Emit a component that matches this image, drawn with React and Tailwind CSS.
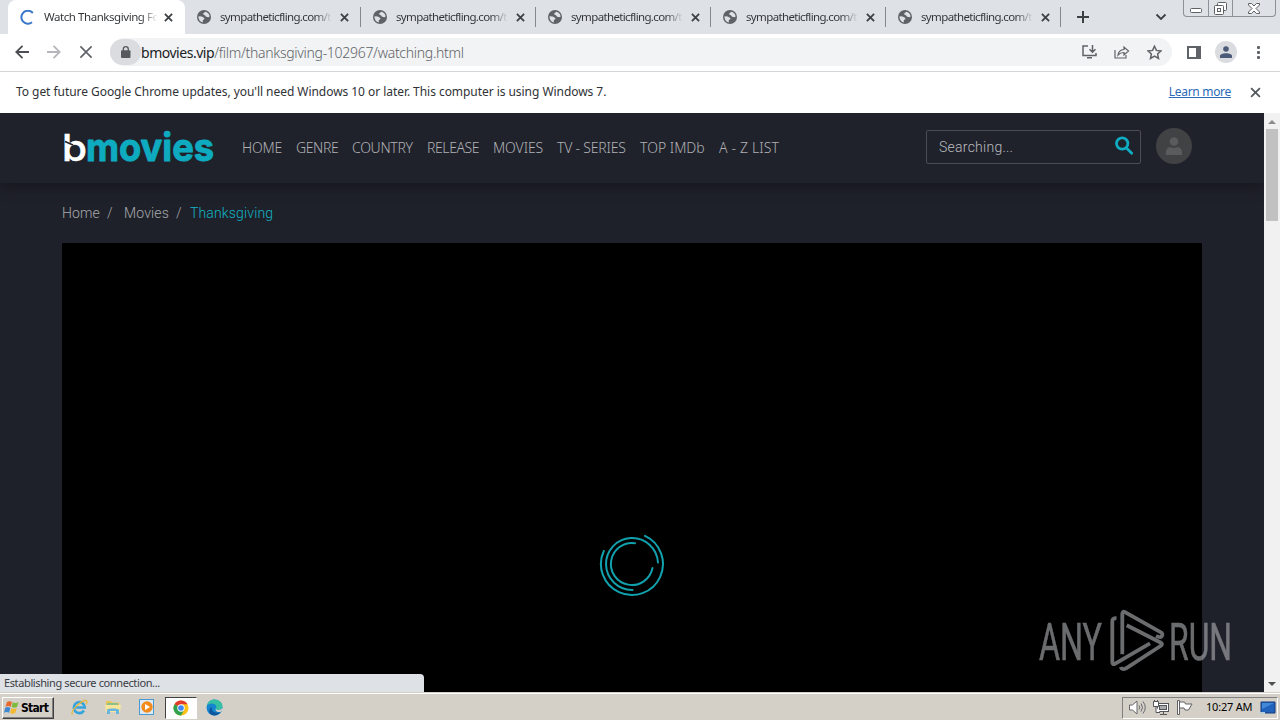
import React from 'react';

const tabs = [1, 2, 3, 4, 5];

const navItems = [
  { label: 'HOME', style: 'w-[54px] tracking-[-0.2px]' },
  { label: 'GENRE', style: 'w-[56px] tracking-[-0.4px]' },
  { label: 'COUNTRY', style: 'w-[75px] tracking-[-0.3px]' },
  { label: 'RELEASE', style: 'w-[66px] tracking-[-0.4px]' },
  { label: 'MOVIES', style: 'w-[64px] tracking-[-0.1px]' },
  { label: 'TV - SERIES', style: 'w-[83px] tracking-[-0.2px]' },
  { label: 'TOP IMDb', style: 'w-[79px]' },
  { label: 'A - Z LIST', style: 'w-[70px] tracking-[0.15px]' }
];

const Cross = ({ size = 9, width = 2, color = '#3c4043' }) => (
  <svg width={size} height={size} viewBox="0 0 10 10" stroke={color} strokeWidth={width} className="shrink-0">
    <path d="M1 1L9 9M9 1L1 9" />
  </svg>
);

const Globe = () => (
  <svg width="14" height="14" viewBox="0 0 14 14" className="shrink-0">
    <circle cx="7" cy="7" r="7" fill="#5f6368" />
    <path d="M8.5 1.8L6.3 3.2v1.4l1.6.6 1.2 1.6 2.5.4 1-.6a5.6 5.6 0 0 0-4.1-4.8z" fill="#dee1e6" />
    <path d="M1.5 6.2l3.2.2 2.6 1.5v1.4L5.8 10v2.4A5.6 5.6 0 0 1 1.5 6.2z" fill="#dee1e6" />
  </svg>
);

const TabStrip = () => (
  <div className="flex h-[34px] bg-[#dee1e6] text-[11.5px]">
    <div className="ml-2 flex h-[34px] w-[177px] shrink-0 items-center rounded-t-lg bg-white pl-3">
      <svg width="15" height="15" viewBox="0 0 15 15" fill="none" className="shrink-0">
        <path d="M12.8 3A6.5 6.5 0 1 0 12 12.3" stroke="#3b78c9" strokeWidth="2" />
      </svg>
      <div className="ml-[9px] w-[114px] whitespace-nowrap bg-gradient-to-r from-[#303336] from-85% to-transparent bg-clip-text tracking-[-0.44px] text-transparent">
        Watch Thanksgiving Fo
      </div>
      <div className="ml-[6px] flex"><Cross /></div>
    </div>
    {tabs.map(tab => (
      <div key={tab} className="flex h-[34px] w-[175px] shrink-0 items-center pl-3 [&:nth-child(n+3)]:pl-[13px]">
        <Globe />
        <div className="ml-[9px] w-[112px] whitespace-nowrap bg-gradient-to-r from-[#303336] from-85% to-transparent bg-clip-text tracking-[-0.64px] text-transparent">
          sympatheticfling.com/t
        </div>
        <div className="ml-[8px] flex"><Cross /></div>
        <div className="-mr-px ml-auto h-[20px] w-px bg-[#85888d]"></div>
      </div>
    ))}
    <div className="flex w-[46px] shrink-0 items-center justify-center">
      <svg width="12" height="12" viewBox="0 0 12 12" stroke="#3c4043" strokeWidth="2">
        <path d="M6 0V12M0 6H12" />
      </svg>
    </div>
    <div className="ml-[49px] flex w-[12px] shrink-0 items-center">
      <svg width="12" height="8" viewBox="0 0 12 8" fill="none" stroke="#3c4043" strokeWidth="1.8">
        <path d="M1.5 1.5L6 6l4.500-4.500" />
      </svg>
    </div>
    {/* Window controls */}
    <div className="ml-[16px] flex h-[17px] w-[93px] shrink-0 rounded-b-[4px] border border-t-0 border-[#8d9198] text-[#5d6065]">
      <div className="flex w-[25px] justify-center border-r border-[#8d9198]">
        <svg width="12" height="5" viewBox="0 0 12 5" className="mt-[8px]">
          <rect x=".5" y=".5" width="11" height="4" rx="1" fill="#fff" stroke="currentColor" />
        </svg>
      </div>
      <div className="flex w-[25px] justify-center border-r border-[#8d9198]">
        <svg width="13" height="13" viewBox="0 0 13 13" fill="#fff" stroke="currentColor" className="mt-[2px]">
          <rect x="3.500" y=".5" width="9" height="8" rx="1" />
          <rect x=".5" y="3.500" width="9" height="9" rx="1" />
          <rect x="3.500" y="6.500" width="3" height="3" />
        </svg>
      </div>
      <div className="flex w-[42px] justify-center">
        <svg width="12" height="11" viewBox="0 0 12 11" fill="#fff" stroke="currentColor" className="mt-[3px]">
          <path d="M.5.5h3L6 3 8.500.5h3v1.500L8 5.500 11.500 9v1.500h-3L6 8l-2.500 2.500h-3V9L4 5.500.5 2z" />
        </svg>
      </div>
    </div>
  </div>
);

const Toolbar = () => (
  <div className="flex h-[38px] items-center border-b border-[#d5d6d8] bg-white pb-px pl-[15px] text-[#5f6368]">
    <svg width="14" height="14" viewBox="0 0 14 14" fill="none" stroke="#4b4f53" strokeWidth="1.800">
      <path d="M14 7H1.500M7.500.8L1.300 7l6.200 6.200" />
    </svg>
    <svg width="14" height="14" viewBox="0 0 14 14" fill="none" stroke="#b5b7ba" strokeWidth="1.800" className="ml-[18px]">
      <path d="M0 7h12.500M6.500.8L12.700 7l-6.200 6.200" />
    </svg>
    <div className="ml-[18px] flex"><Cross size={14} width={1.2} color="#5f6368" /></div>
    <div className="ml-[17px] flex h-[28px] w-[1062px] shrink-0 items-center rounded-full bg-[#f1f3f4]">
      <div className="flex h-[26px] w-[31px] shrink-0 items-center justify-center rounded-full bg-[#dadce0]">
        <svg width="10" height="12" viewBox="0 0 10 12">
          <rect x="0" y="4.300" width="9.500" height="7.700" rx="1" fill="#55595e" />
          <path d="M2.300 5V3.200a2.500 2.500 0 0 1 5 0V5" fill="none" stroke="#55595e" strokeWidth="1.300" />
        </svg>
      </div>
      <div className="w-[939px] whitespace-nowrap text-[14px] font-light tracking-[-0.29px]">
        <span className="font-normal tracking-[-0.47px] text-[#202124]">bmovies.vip</span>/film/thanksgiving-102967/watching.html
      </div>
      <svg width="15" height="14" viewBox="0 0 15 14" fill="none" stroke="#5f6368" strokeWidth="1.500" className="ml-[2px] shrink-0">
        <path d="M6 1H1v9.500h13V8M5 12.700h5M10.500 0v7M7.500 4.300l3 3 3-3" />
      </svg>
      <svg width="16" height="14" viewBox="0 0 16 14" fill="none" stroke="#5f6368" strokeWidth="1.200" className="ml-[17px] shrink-0">
        <path d="M1 5v8h11v-3M4 10c.5-3.500 2.500-5.300 6-5.500V2l4.500 4L10 10V7.500C7.500 7.500 5.500 8.300 4 10z" />
      </svg>
      <svg width="15" height="15" viewBox="0 0 15 15" fill="none" stroke="#5f6368" strokeWidth="1.500" className="ml-[17px] shrink-0">
        <path d="M7.500 1.200l1.900 4.200 4.600.5-3.400 3.100.9 4.500-4-2.300-4 2.300.9-4.500L1 5.900l4.600-.5z" />
      </svg>
    </div>
    <svg width="14" height="13" viewBox="0 0 14 13" className="ml-[15px] shrink-0">
      <rect x="1" y="1" width="12" height="11" fill="none" stroke="#5f6368" strokeWidth="2" />
      <rect x="9" y="0" width="5" height="13" fill="#5f6368" />
    </svg>
    <div className="ml-[14px] flex h-[22px] w-[22px] shrink-0 items-center justify-center rounded-full bg-[#dadce0]">
      <svg width="12" height="12" viewBox="0 0 12 12" fill="#4c5978">
        <circle cx="6" cy="3" r="2.800" />
        <path d="M0 12V9.800C0 8 3.500 7.200 6 7.200s6 .8 6 2.600V12z" />
      </svg>
    </div>
    <svg width="3" height="13" viewBox="0 0 3 13" fill="#5f6368" className="ml-[20px] shrink-0">
      <rect width="3" height="3" rx="1" />
      <rect y="5" width="3" height="3" rx="1" />
      <rect y="10" width="3" height="3" rx="1" />
    </svg>
  </div>
);

const InfoBar = () => (
  <div className="flex h-[41px] items-center bg-white pl-4 pr-[19px] text-[12px] text-[#303236]">
    <span className="mb-[2px] whitespace-nowrap tracking-[-0.05px]">
      To get future Google Chrome updates, you'll need Windows 10 or later. This computer is using Windows 7.
    </span>
    <span className="mb-[2px] ml-auto mr-[19px] tracking-[-0.3px] text-[#2a6ab8] underline">Learn more</span>
    <Cross size={11} width={1.6} color="#55585c" />
  </div>
);

const SiteHeader = () => (
  <div className="relative flex h-[70px] shrink-0 items-center bg-[#20222b] pb-[2px] pl-[62px] shadow-[0_3px_14px_rgba(0,0,0,0.35)]">
    <svg width="154" height="40" viewBox="0 0 154 40" className="-mt-px shrink-0 overflow-visible font-['Inter']">
      <text x="0" y="33.500" fontSize="37" fontWeight="500" fill="#fff" stroke="#fff" strokeWidth=".5" textLength="25" lengthAdjust="spacingAndGlyphs">b</text>
      <path d="M3 14.500l8 3.500" stroke="#20222b" strokeWidth="1.500" />
      <text x="24" y="33.500" fontSize="39" fontWeight="700" fill="#0eabc0" stroke="#0eabc0" strokeWidth="1" strokeLinejoin="round" textLength="128" lengthAdjust="spacingAndGlyphs">movies</text>
    </svg>
    <div className="ml-[26px] mt-px flex text-[14px] font-light text-[#b0b1b5]">
      {navItems.map(item => (
        <span key={item.label} className={`${item.style} shrink-0 whitespace-nowrap`}>{item.label}</span>
      ))}
    </div>
    <div className="ml-auto mr-[15px] flex h-[34px] w-[215px] items-center rounded-[2px] border border-[#4b4c54] pl-3 pr-[7px] font-['Roboto'] text-[14px] font-light tracking-[0.25px] text-[#bbbcbf]">
      Searching...
      <svg width="18" height="19" viewBox="0 0 18 19" fill="none" stroke="#10acc2" strokeWidth="2.800" className="-mt-1 ml-auto">
        <circle cx="7.200" cy="7.500" r="5.700" />
        <path d="M11.500 12l5.200 5.200" strokeLinecap="round" />
      </svg>
    </div>
    <div className="-mt-[3px] mr-[72px] flex h-9 w-9 items-center justify-center rounded-full bg-[#414244]">
      <svg width="16" height="18" viewBox="0 0 16 18" fill="#5a5b5d">
        <circle cx="8" cy="4.500" r="4.300" />
        <path d="M0 18v-3c0-2.500 1.500-4.500 4-5 2.500 1.200 5.500 1.200 8 0 2.500.5 4 2.500 4 5v3z" />
      </svg>
    </div>
  </div>
);

const Spinner = () => (
  <svg width="66" height="64" viewBox="0 0 66 64" fill="none" stroke="#11a2ae" strokeWidth="2" strokeLinecap="round">
    <path d="M46 2.900A31 31 0 1 1 4.800 18" />
    <path d="M59 29.500A26 26 0 1 0 33.500 57" />
    <path d="M36 10.200A21 21 0 1 0 53.500 35" />
  </svg>
);

const Watermark = () => (
  <svg width="196" height="66" viewBox="0 0 196 66" className="overflow-visible font-['Roboto']">
    <g fill="#a5a7aa" stroke="#a5a7aa" strokeWidth=".6" opacity=".65" fontSize="51.500">
      <text x="2" y="51" textLength="63" lengthAdjust="spacingAndGlyphs">ANY</text>
      <text x="132" y="51" textLength="63" lengthAdjust="spacingAndGlyphs">RUN</text>
    </g>
    <g fill="none" stroke="#a5a7aa" strokeWidth="3.800" strokeLinejoin="round" opacity=".65">
      <path d="M79.500 9.300c-2.700-.3-4.200.7-4.200 2.700v41c0 2 1 2.700 2.500 1.800L113 34.300" />
      <path d="M85.300 45.300V5c0-2 1-2.800 2.700-1.800l35.500 20c2 1.200 2.500 2.500 1.200 4-1.200 1.500-3 1-5.700-.3" />
      <path d="M89.700 16.200l33.800 17.300c2 1 2 2.300 0 3.500L89 59.300c-2.500 1.300-4.500 1-5.300-1.300" />
    </g>
  </svg>
);

const Page = () => (
  <div className="relative flex h-[579px] overflow-hidden bg-[#1f212a]">
    <div className="flex w-[1264px] shrink-0 flex-col overflow-hidden">
      <SiteHeader />
      <div className="flex h-[60px] shrink-0 items-center pl-[62px] font-['Roboto'] text-[14px] font-light tracking-[0.15px] text-[#a8a9ad]">
        <span className="w-[45px]">Home</span>
        <span className="w-[17px]">/</span>
        <span className="w-[52px]">Movies</span>
        <span className="w-[14px]">/</span>
        <span className="text-[#10b5c5]">Thanksgiving</span>
      </div>
      <div className="ml-[62px] flex h-[449px] w-[1140px] justify-center bg-black pt-[290px]">
        <Spinner />
      </div>
    </div>
    <div className="flex w-4 flex-col items-center bg-[#f1f1f1] pb-[6px] pt-[7px]">
      <div className="h-0 w-0 border-x-4 border-b-4 border-x-transparent border-b-[#8b8b8b]"></div>
      <div className="mt-[5px] h-[92px] w-3 bg-[#c1c1c1]"></div>
      <div className="mt-auto h-0 w-0 border-x-4 border-t-4 border-x-transparent border-t-[#505050]"></div>
    </div>
    <div className="absolute bottom-[17px] left-[1037px] flex"><Watermark /></div>
    <div className="absolute bottom-0 left-0 flex h-[18px] w-[424px] items-center rounded-tr-[4px] bg-[#dee1e6] pl-1 text-[11px] tracking-[-0.38px] text-[#3c4043]">
      Establishing secure connection...
    </div>
  </div>
);

const Taskbar = () => (
  <div className="flex h-[28px] items-center border-t border-[#d4d0c8] bg-[#d4d0c8] text-black shadow-[inset_0_1px_0_#fff]">
    <div className="ml-[2px] mt-[2px] flex h-[22px] w-[52px] items-center border border-b-[#404040] border-l-white border-r-[#404040] border-t-white pl-px shadow-[inset_-1px_-1px_0_#808080]">
      <svg width="16" height="15" viewBox="0 0 16 15" className="shrink-0">
        <path d="M3 2c2-1.300 3.500-1 5 0L6.700 6.800C5 5.800 3.500 5.800 1.500 6.700z" fill="#e7682c" />
        <path d="M8.800 2.300c1.700 1 3.500 1 5.700 0L13 7c-2 1-3.700 1-5.400 0z" fill="#7fba3c" />
        <path d="M1.200 7.700c2-1 3.600-.8 5.200.2L5 12.800c-1.600-1-3-1-5 0z" fill="#3f88d2" />
        <path d="M7.300 8.200c1.600 1 3.400 1 5.400 0l-1.400 4.800c-2 1-3.700 1-5.300 0z" fill="#f4b92e" />
      </svg>
      <span className="ml-px font-['DejaVu_Sans_Condensed','DejaVu_Sans'] text-[12px] font-bold tracking-[-0.7px]">Start</span>
    </div>
    {/* Internet Explorer */}
    <svg width="17" height="17" viewBox="0 0 17 17" fill="none" className="ml-[17px] mt-px shrink-0">
      <path d="M13 11.500a5.500 5.500 0 1 1 .8-3H4" stroke="#36a4df" strokeWidth="2.600" />
      <path d="M1.500 15.500C-1 13 8 3 14 1.500c3-.5 2 2.500 1 4" stroke="#e9b93c" strokeWidth="1.300" />
    </svg>
    {/* Explorer */}
    <svg width="16" height="16" viewBox="0 0 16 16" className="ml-[17px] mt-px shrink-0">
      <path d="M1 2h5l1 1.500h7V10H1z" fill="#e9c556" />
      <path d="M2 4h11v4H2z" fill="#8dc18b" />
      <path d="M0 6h16l-1 7H1z" fill="#f8e49a" />
      <path d="M2 15V11c0-2 12-2 12 0v4h-3v-3H5v3z" fill="#67b6df" />
    </svg>
    {/* Media Player */}
    <svg width="16" height="16" viewBox="0 0 16 16" className="ml-[18px] mt-px shrink-0">
      <rect x=".5" y=".5" width="14" height="15" fill="#dceaf5" stroke="#4a9ace" />
      <circle cx="8" cy="8" r="5.700" fill="#f28a1c" />
      <path d="M6 5v6l5-3z" fill="#fff" />
    </svg>
    {/* Chrome */}
    <div className="ml-[10px] mt-[2px] flex h-[22px] w-[32px] shrink-0 items-center justify-center border border-b-white border-l-[#404040] border-r-white border-t-[#404040] bg-white">
      <svg width="16" height="16" viewBox="0 0 16 16">
        <circle cx="8" cy="8" r="7.500" fill="#fbc116" />
        <path d="M8 8L1.500 4.200a7.500 7.500 0 0 1 13 0H8z" fill="#e33b2e" />
        <path d="M1.500 4.200A7.500 7.500 0 0 0 8 15.500l3.300-5.700L8 8z" fill="#2fa14f" />
        <circle cx="8" cy="8" r="3.700" fill="#fff" />
        <circle cx="8" cy="8" r="2.800" fill="#4285f4" />
      </svg>
    </div>
    {/* Edge */}
    <svg width="17" height="17" viewBox="0 0 17 17" className="ml-[9px] mt-px shrink-0">
      <circle cx="8.500" cy="8.500" r="8" fill="#1685d0" />
      <path d="M.7 7C2 2.500 5 .5 8.500.5c4.500 0 8 3 8 6.500 0 2.500-2 4-4 4-2.500 0-3-1-2.300-2.200C11 6 8 4.500 5.500 4.500 3.500 4.500 1.500 5.500.7 7z" fill="#37bfa1" />
      <path d="M6 8c-1 3.500 2 6.500 6.500 5.500l2-.5c-3 4-7 4-9.500 2.500C2.500 14 2.500 9.500 6 8z" fill="#0f559b" />
      <path d="M10.200 8.800c-.7 1.200-.2 2.200 2.300 2.200 1.600 0 3-.8 3.600-2l.4 2-2 2c-4 .5-6-1.500-4.300-4.200z" fill="#d4d0c8" />
    </svg>
    {/* Tray */}
    <div className="ml-auto mr-[2px] mt-[2px] flex h-[22px] w-[156px] items-center border border-b-white border-l-[#808080] border-r-white border-t-[#808080] pl-[6px]">
      <svg width="17" height="15" viewBox="0 0 17 15" fill="none" stroke="#66676a" className="shrink-0">
        <path d="M.5 5h3L8 1v13L3.500 10h-3z" fill="#fff" />
        <path d="M10 5.500q1.500 2 0 4M12 3.500q3 4 0 8M14 1.500q4.500 6 0 12" />
      </svg>
      <svg width="16" height="16" viewBox="0 0 16 16" fill="#fff" stroke="#55565a" className="ml-[7px] shrink-0">
        <rect x="4.500" y="3.500" width="11" height="8" />
        <rect x="6.500" y="5.500" width="7" height="4" fill="#aaa" />
        <path d="M7 14.500h7M10.500 12v2M.5 1.500h5v5h-5zM1.500 0v2M4.500 0v2M3 6.500v6h4" />
      </svg>
      <svg width="16" height="15" viewBox="0 0 16 15" fill="#fff" stroke="#606164" className="ml-[8px] shrink-0">
        <path d="M.5.5h2v14h-2zM2.500 2h5l1 2h6.500l-3.500 6h-3.500l-1-2H2.500z" />
      </svg>
      <span className="ml-[13px] whitespace-nowrap text-[11px] tracking-[-0.2px]">10:27 AM</span>
      <svg width="16" height="14" viewBox="0 0 16 14" className="ml-auto mr-px shrink-0">
        <path d="M1 1h14v11H1z" fill="#2162bd" stroke="#153b7c" />
        <path d="M2 2h12L2 8z" fill="#4389da" />
        <path d="M0 11h5v2H0z" fill="#b7ceda" />
      </svg>
    </div>
  </div>
);

export default function App() {
  return (
    <div className="h-[720px] w-[1280px] overflow-hidden bg-white font-['Noto_Sans','Open_Sans',sans-serif]">
      <TabStrip />
      <Toolbar />
      <InfoBar />
      <Page />
      <Taskbar />
    </div>
  );
}
